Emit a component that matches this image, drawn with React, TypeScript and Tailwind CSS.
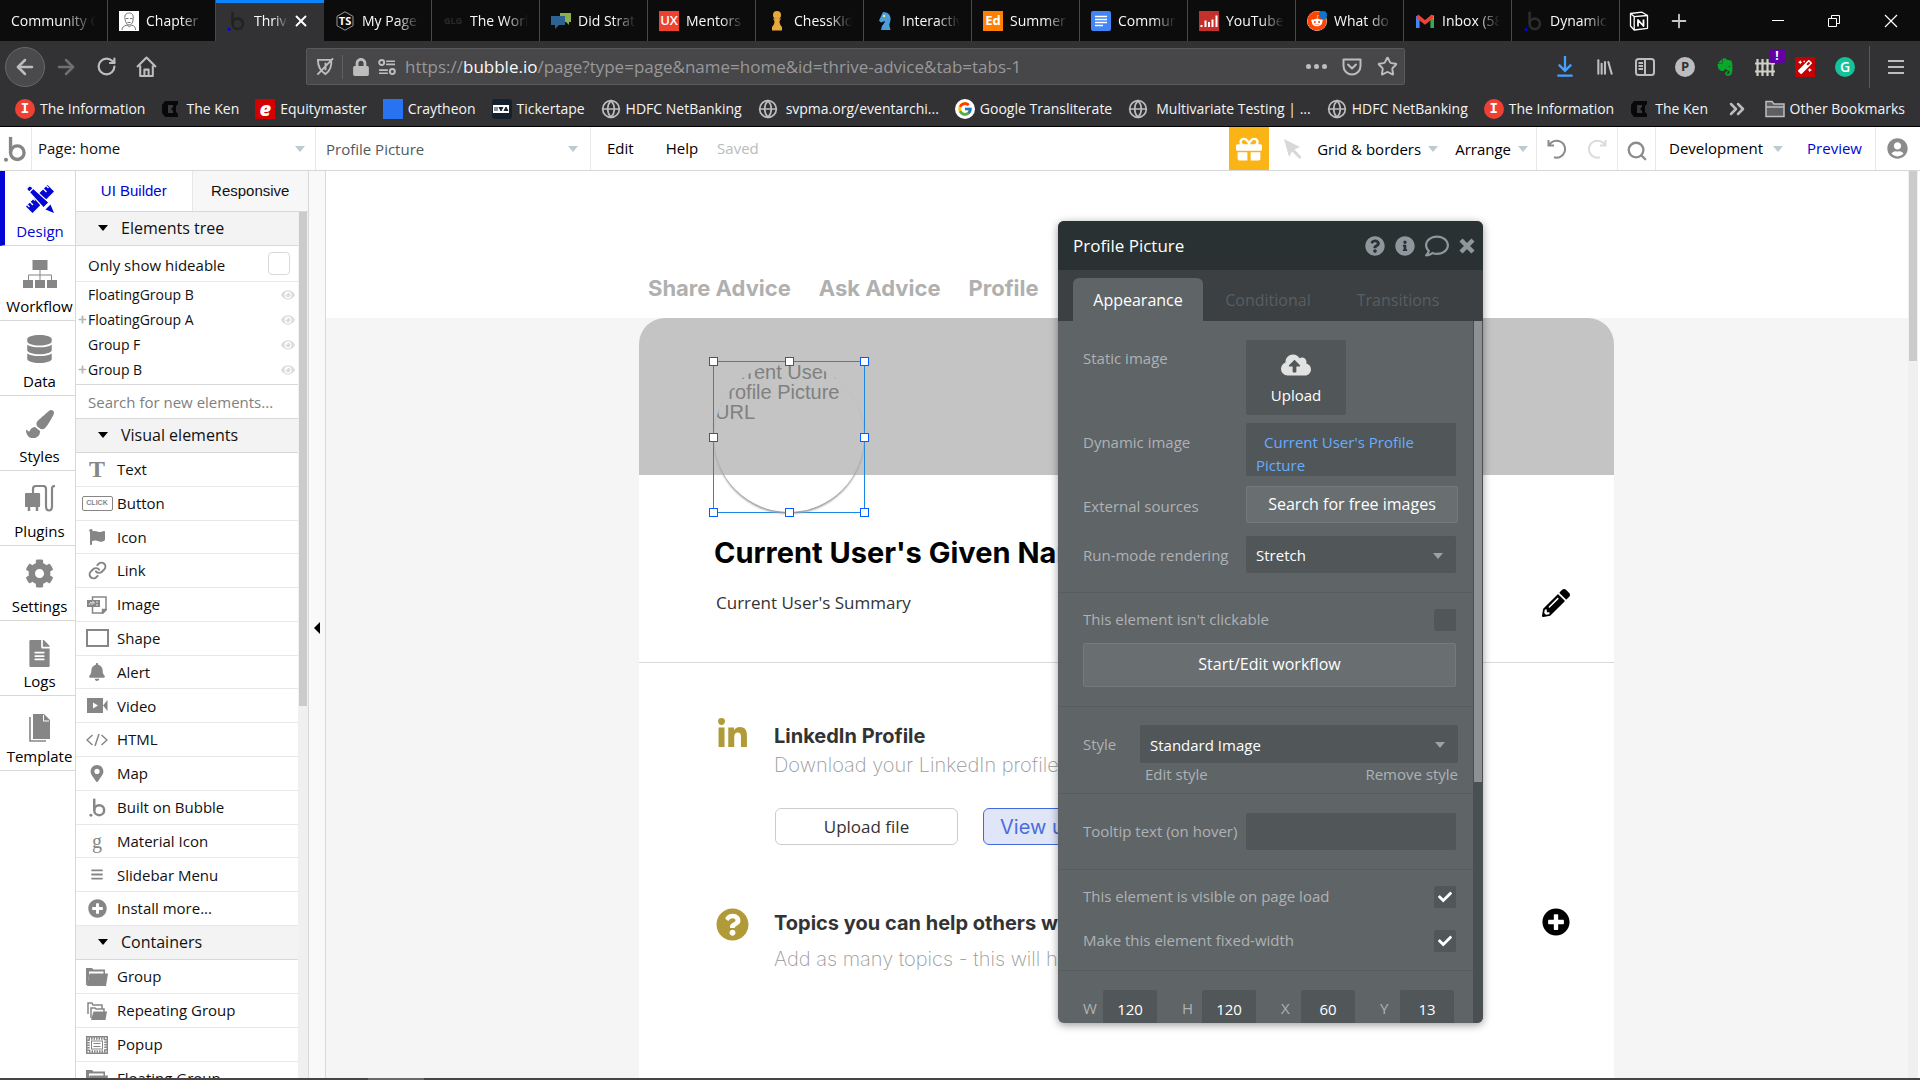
import React from 'react';
import {
  FaQuestionCircle, FaInfoCircle, FaRegComment, FaCloudUploadAlt, FaCheck, FaGift, FaEye, FaPlus, FaFlag,
  FaBell, FaMapMarkerAlt, FaDatabase, FaPaintBrush, FaCog, FaFileAlt, FaLinkedinIn, FaPlusCircle,
  FaPencilAlt, FaUserCircle, FaEvernote, FaMagic, FaBars, FaReddit, FaLock,
} from 'react-icons/fa';
import { FcGoogle } from 'react-icons/fc';
import { ArrowLeft, ArrowRight, RotateCw, Link, Search, Star, X, Plus, Globe, ChevronsRight, Library } from 'lucide-react';

const BubbleMark = ({ className = '', dot = 'currentColor' }: { className?: string; dot?: string }) => (
  <svg viewBox="0 0 24 28" className={className} fill="none" aria-hidden="true">
    <circle cx="14.5" cy="18" r="7.3" stroke="currentColor" strokeWidth="3.6" />
    <path d="M7.2 1v17" stroke="currentColor" strokeWidth="3.6" />
    <circle cx="2.3" cy="25.5" r="2.2" fill={dot} />
  </svg>
);

const Caret = ({ className = '' }: { className?: string }) => (
  <svg viewBox="0 0 10 6" className={`h-1.5 w-2.5 shrink-0 ${className}`} fill="currentColor" aria-hidden="true">
    <path d="M0 0h10L5 6z" />
  </svg>
);

const Letter = ({ children, className }: { children: React.ReactNode; className: string }) => (
  <span className={`flex h-5 w-5 shrink-0 items-center justify-center leading-none ${className}`}>{children}</span>
);

const NotionIcon = () => (
  <svg viewBox="0 0 20 20" className="h-5 w-5" fill="none" stroke="#fff" strokeWidth="1.3" strokeLinejoin="round" aria-hidden="true">
    <path d="M1.5 2.5 13 1.2l5.5 3.3v12.8L5.2 19 1.500 15z" />
    <path d="M1.500 2.500 5.200 5.600 18.500 4.500M5.200 5.600V19" />
    <path d="M9 15.500V9l5.500 6V8.500" strokeWidth="1.800" />
  </svg>
);

type TabData = { title: string; icon?: React.ReactNode };

const tabsBefore: TabData[] = [
  { title: 'Community G' },
  {
    title: 'Chapter 1',
    icon: (
      <svg viewBox="0 0 20 20" className="h-5 w-5 shrink-0 bg-white" fill="none" stroke="#777" strokeWidth="1" aria-hidden="true">
        <path d="M6 8C5 3 8 2 10.500 2S15 4 14 9c0 3-2 5-4 5S6.500 11 6 8z" />
        <path d="M7 7.500h2.500M11 7.500h2.500M8.500 11.500h3M3 19c0-3 2-4 5-5l2.500 2 2-2c3 1 4 2 4 5" />
      </svg>
    ),
  },
];

const tabsAfter: TabData[] = [
  {
    title: 'My Page',
    icon: (
      <Letter className="relative text-[11px] font-bold text-white">
        <svg viewBox="0 0 20 20" className="absolute inset-0 h-5 w-5" fill="none" stroke="#999" aria-hidden="true">
          <path d="M10 .8 18 5.300v9.400L10 19.200 2 14.700V5.300z" />
        </svg>
        <span className="relative">TS</span>
      </Letter>
    ),
  },
  { title: 'The World', icon: <Letter className="text-[9px] font-bold text-[#2a2a2a]">GLG</Letter> },
  {
    title: 'Did Strat',
    icon: (
      <svg viewBox="0 0 20 20" className="h-5 w-5 shrink-0" aria-hidden="true">
        <path d="M9 2h11v9h-2v3l-3-3H9z" fill="#8bb04b" />
        <path d="M0 5h14v9H8l-4 4v-4H0z" fill="#2d6394" />
      </svg>
    ),
  },
  { title: 'Mentors', icon: <Letter className="bg-[#ee4130] text-[13px] font-semibold text-white">UX</Letter> },
  {
    title: 'ChessKid',
    icon: (
      <svg viewBox="0 0 20 20" className="h-5 w-5 shrink-0" fill="#e9a93a" aria-hidden="true">
        <circle cx="10" cy="4" r="4" />
        <path d="M6 7.500h8L12.500 10c0 3 1 4 2.500 6v3.500H5V16c1.500-2 2.500-3 2.500-6z" />
      </svg>
    ),
  },
  {
    title: 'Interactiv',
    icon: (
      <svg viewBox="0 0 20 20" className="h-5 w-5 shrink-0" fill="#4a9fd8" aria-hidden="true">
        <path d="M8 1c6 0 8 4 7.500 8-.500 3-1.500 4-1 6l1 4H6l1-4c1-2 3-3 3-5L6 11.500 4 9.500z" />
        <circle cx="9" cy="5" r="1.200" fill="#f7e27a" />
      </svg>
    ),
  },
  { title: 'Summer', icon: <Letter className="bg-[#ff7f00] text-[13px] font-bold text-white">Ed</Letter> },
  {
    title: 'Commun',
    icon: (
      <svg viewBox="0 0 20 20" className="h-5 w-5 shrink-0" aria-hidden="true">
        <rect width="20" height="20" rx="2" fill="#4285f4" />
        <path d="M4 5.500h12M4 8.500h12M4 11.500h12M4 14.500h8" stroke="#fff" strokeWidth="1.700" />
      </svg>
    ),
  },
  {
    title: 'YouTube',
    icon: (
      <svg viewBox="0 0 20 20" className="h-5 w-5 shrink-0" aria-hidden="true">
        <rect width="20" height="20" fill="#c4302b" />
        <path d="M2.500 16v-2M6.500 16V9.500M10 16v-5M13.500 16V8.500M17.500 16V4.500" stroke="#fff" strokeWidth="2" />
      </svg>
    ),
  },
  {
    title: 'What do',
    icon: (
      <span className="relative h-5 w-5 shrink-0">
        <FaReddit className="h-5 w-5 rounded-full bg-white text-[#ff4500]" />
        <span className="absolute top-0 right-0 h-2 w-2 rounded-full bg-[#0a76d0]" />
      </span>
    ),
  },
  {
    title: 'Inbox (58',
    icon: (
      <svg viewBox="0 0 20 20" className="h-5 w-5 shrink-0" fill="none" strokeWidth="3.600" aria-hidden="true">
        <path d="M2.800 17V5" stroke="#4285f4" />
        <path d="M17.200 17V5" stroke="#34a853" />
        <path d="M17.200 8V4.500" stroke="#fbbc04" />
        <path d="M2 5l8 6.500L18 5" stroke="#ea4335" />
      </svg>
    ),
  },
  { title: 'Dynamic', icon: <BubbleMark className="h-5 w-5 shrink-0 text-[#2d2d2d]" dot="#00f" /> },
];

const BrowserTab = ({ tab }: { tab: TabData }) => (
  <button type="button" className="flex h-full w-27 shrink-0 items-center border-r border-[#4a4a4a] px-[11px] text-left">
    {tab.icon}
    <span
      className={`flex-1 overflow-hidden whitespace-nowrap [mask-image:linear-gradient(to_right,black_60%,transparent)] ${
        tab.icon ? 'ml-[7px]' : ''
      }`}
    >
      {tab.title}
    </span>
  </button>
);

const TabStrip = () => (
  <div className="flex h-[41px] items-center bg-[#0c0c0d] text-sm text-[#f9f9fa]">
    {tabsBefore.map((t) => (
      <BrowserTab key={t.title} tab={t} />
    ))}
    <div className="flex h-full w-27 shrink-0 items-center border-t-[3px] border-[#0a84ff] bg-[#323234] px-[10px] pb-[3px]">
      <BubbleMark className="h-5 w-5 shrink-0 text-[#222]" dot="#00f" />
      <span className="ml-2 flex-1 overflow-hidden whitespace-nowrap [mask-image:linear-gradient(to_right,black_60%,transparent)]">
        Thrive
      </span>
      <button type="button" aria-label="Close tab" className="mr-1 ml-1">
        <X className="h-[18px] w-[18px] text-white" strokeWidth={2.500} />
      </button>
    </div>
    {tabsAfter.map((t) => (
      <BrowserTab key={t.title} tab={t} />
    ))}
    <button type="button" aria-label="Notion" className="ml-[9px]">
      <NotionIcon />
    </button>
    <button type="button" aria-label="New tab" className="ml-[19px]">
      <Plus className="h-[22px] w-[22px] text-[#c8c8c8]" strokeWidth={2} />
    </button>
    <div className="ml-auto flex items-center gap-11 pr-[22px] text-white">
      <button type="button" aria-label="Minimize" className="h-px w-3 bg-white" />
      <button type="button" aria-label="Restore">
        <svg viewBox="0 0 12 12" className="h-3 w-3" fill="none" stroke="currentColor" aria-hidden="true">
          <path d="M.500 3.500h8v8h-8zM3.500 3.500v-3h8v8h-3" />
        </svg>
      </button>
      <button type="button" aria-label="Close window">
        <svg viewBox="0 0 14 14" className="h-3.5 w-3.5" stroke="currentColor" strokeWidth="1.200" aria-hidden="true">
          <path d="M1 1l12 12M13 1 1 13" />
        </svg>
      </button>
    </div>
  </div>
);

const NavBar = () => (
  <div className="flex h-[47px] items-center pt-1 text-[#bdbdbe]">
    <button type="button" aria-label="Back" className="ml-[5px] flex h-10 w-10 items-center justify-center rounded-full border border-[#68686a] bg-[#4a4a4c]">
      <ArrowLeft className="h-6 w-6" strokeWidth={2.500} />
    </button>
    <button type="button" aria-label="Forward" className="ml-[9px] text-[#6f6f71]">
      <ArrowRight className="h-6 w-6" strokeWidth={2.500} />
    </button>
    <button type="button" aria-label="Reload" className="ml-[18px]">
      <RotateCw className="h-[21px] w-[21px]" strokeWidth={2.500} />
    </button>
    <button type="button" aria-label="Home" className="ml-[19px]">
      <svg viewBox="0 0 20 20" className="h-[21px] w-[21px]" fill="none" stroke="currentColor" strokeWidth="2" strokeLinejoin="round" aria-hidden="true">
        <path d="M1 10.500 10 1.500l9 9M4 9v10h12V9M8 19v-6h4v6" />
      </svg>
    </button>
    <div className="ml-[149px] flex h-[37px] w-[1099px] items-center rounded-xs border border-[#5a5a5c] bg-[#474749] pr-[6px]">
      <svg viewBox="0 0 20 20" className="ml-[9px] h-[19px] w-[19px]" fill="none" stroke="currentColor" strokeWidth="2" aria-hidden="true">
        <path d="M2 3h14c1 8-2 12-6 15C5 15 2 11 2 3zM10 6v8M1.500 18.500 18 1.500" />
      </svg>
      <span className="ml-[7px] h-6 w-px bg-[#606062]" />
      <FaLock className="ml-[10px] h-[18px] w-4" />
      <svg viewBox="0 0 20 18" className="ml-[9px] h-4 w-[18px]" fill="none" stroke="currentColor" strokeWidth="2.200" aria-hidden="true">
        <circle cx="4" cy="4" r="2.800" />
        <circle cx="16" cy="14" r="2.800" />
        <path d="M9 2.500h10M9 6h10M1 12.500h10M1 16h10" strokeWidth="1.800" />
      </svg>
      <div role="textbox" aria-label="Address" tabIndex={0} className="ml-[9px] flex-1 pt-px text-[17px] whitespace-nowrap text-[#98989a]">
        https://<span className="text-[#f9f9fa]">bubble.io</span>/page?type=page&amp;name=home&amp;id=thrive-advice&amp;tab=tabs-1
      </div>
      <button type="button" aria-label="Page actions" className="flex gap-[3px]">
        <span className="h-[5px] w-[5px] rounded-full bg-current" />
        <span className="h-[5px] w-[5px] rounded-full bg-current" />
        <span className="h-[5px] w-[5px] rounded-full bg-current" />
      </button>
      <button type="button" aria-label="Save to Pocket" className="ml-[15px]">
        <svg viewBox="0 0 20 18" className="h-[18px] w-5" fill="none" stroke="currentColor" strokeWidth="2" strokeLinecap="round" strokeLinejoin="round" aria-hidden="true">
          <path d="M1.500 1.500h17V8a8.500 8.500 0 0 1-17 0zM6 6.500l4 4 4-4" />
        </svg>
      </button>
      <button type="button" aria-label="Bookmark" className="ml-[15px]">
        <Star className="h-[21px] w-[21px]" strokeWidth={2.200} />
      </button>
    </div>
    <div className="ml-auto flex items-center gap-5">
      <button type="button" aria-label="Downloads" className="text-[#45a1ff]">
        <svg viewBox="0 0 20 22" className="h-[21px] w-5" fill="none" stroke="currentColor" strokeWidth="2.400" aria-hidden="true">
          <path d="M10 0v15M3.500 9l6.500 6.500L16.500 9M2 20.500h16" />
        </svg>
      </button>
      <button type="button" aria-label="Library">
        <Library className="h-5 w-5" strokeWidth={2.500} />
      </button>
      <button type="button" aria-label="Sidebars">
        <svg viewBox="0 0 20 18" className="h-[18px] w-5" fill="none" stroke="currentColor" strokeWidth="2" aria-hidden="true">
          <rect x="1" y="1" width="18" height="16" rx="2.500" />
          <path d="M10 1v16M3.500 5H8M3.500 8H8M3.500 11H8" />
        </svg>
      </button>
      <Letter className="rounded-full bg-[#bdbdbe] text-[13px] font-bold text-[#323234]">P</Letter>
      <FaEvernote className="h-5 w-5 text-[#09a82b]" />
      <span className="relative">
        <svg viewBox="0 0 20 20" className="h-5 w-5" stroke="#d0d0c8" strokeWidth="2.200" aria-hidden="true">
          <path d="M2.500 2v17M7.500 2v17M12.500 2v17M17.500 2v17M0 6.500h20M0 14.500h20" />
        </svg>
        <span className="absolute -top-2 left-3.5 flex h-3.5 w-4 items-center justify-center rounded-xs bg-[#6200a4] text-xs font-bold text-white">!</span>
      </span>
      <Letter className="bg-[#c40000] text-[#fff]"><FaMagic className="h-3.5 w-3.5" /></Letter>
      <Letter className="rounded-full bg-[#15c39a] text-sm font-semibold text-white">G</Letter>
    </div>
    <span className="ml-[14px] h-[42px] w-px bg-[#5a5a5c]" />
    <button type="button" aria-label="Menu" className="mr-4 ml-[18px] flex flex-col gap-1">
      <span className="h-[2px] w-4 bg-current" />
      <span className="h-[2px] w-4 bg-current" />
      <span className="h-[2px] w-4 bg-current" />
    </button>
  </div>
);

const InfoIcon = () => <Letter className="rounded-full bg-[#ef4034] font-mono text-sm font-bold text-white">I</Letter>;
const KenIcon = () => (
  <svg viewBox="0 0 20 20" className="h-5 w-5 shrink-0" aria-hidden="true">
    <path d="M4 2h13v3l-2 2v6l2 2v3H4l-3-4V6z" fill="#080808" />
    <path d="M7 6h5v2l-2 2 2 2v2H7z" fill="#3a3a3c" />
  </svg>
);
const GlobeIcon = () => <Globe className="h-5 w-5 shrink-0 text-[#bdbdbe]" strokeWidth={2} />;

const bookmarks: { label: string; icon: React.ReactNode; indent?: boolean }[] = [
  { label: 'The Information', icon: <InfoIcon /> },
  { label: 'The Ken', icon: <KenIcon /> },
  { label: 'Equitymaster', icon: <Letter className="bg-[#d40000] text-xl font-black text-white italic">e</Letter> },
  { label: 'Craytheon', icon: <Letter className="bg-[#2874f0]">{''}</Letter> },
  {
    label: 'Tickertape',
    icon: (
      <svg viewBox="0 0 20 20" className="h-5 w-5 shrink-0" aria-hidden="true">
        <rect width="20" height="20" rx="3" fill="#14202c" />
        <rect x="1" y="6" width="16" height="8" fill="#fff" />
        <path d="M2 9h4M2 11h4M7 8l2 4 2-4M12 12l2-4 2 4" stroke="#14202c" fill="#14202c" />
      </svg>
    ),
  },
  { label: 'HDFC NetBanking', icon: <GlobeIcon /> },
  { label: 'svpma.org/eventarchi...', icon: <GlobeIcon />, indent: true },
  {
    label: 'Google Transliterate',
    icon: (
      <Letter className="rounded-full bg-white">
        <FcGoogle className="h-4 w-4" />
      </Letter>
    ),
  },
  { label: 'Multivariate Testing | ...', icon: <GlobeIcon />, indent: true },
  { label: 'HDFC NetBanking', icon: <GlobeIcon /> },
  { label: 'The Information', icon: <InfoIcon /> },
  { label: 'The Ken', icon: <KenIcon /> },
];

const BookmarksBar = () => (
  <div className="flex h-[39px] items-center gap-4 border-b border-black px-[15px] pt-1 text-sm text-[#f4f4f5]">
    {bookmarks.map((b, i) => (
      <a key={i} href="#" className={`flex items-center whitespace-nowrap ${b.indent ? 'gap-2' : 'gap-[5px]'}`}>
        {b.icon}
        {b.label}
      </a>
    ))}
    <button type="button" aria-label="More bookmarks" className="ml-auto">
      <ChevronsRight className="h-6 w-6 text-[#bdbdbe]" strokeWidth={2.500} />
    </button>
    <a href="#" className="flex items-center gap-[5px] whitespace-nowrap">
      <svg viewBox="0 0 20 18" className="h-[18px] w-5" fill="#5f5f61" stroke="#bdbdbe" strokeWidth="1.500" aria-hidden="true">
        <path d="M1 16.500V1.500h6l2 2.500h10v12.500zM1 7h18" />
      </svg>
      Other Bookmarks
    </a>
  </div>
);

const EditorToolbar = () => (
  <header className="flex h-11 items-stretch border-b border-[#d5d7d9] bg-white text-[15px] text-black">
    <a href="#" aria-label="Bubble" className="flex w-8 items-center justify-center border-r border-[#e8e8e8] pr-[2px] text-[#858585]">
      <BubbleMark className="h-[26px] w-6" />
    </a>
    <button type="button" className="flex w-71 items-center justify-between border-r border-[#e8e8e8] pr-[10px] pl-[6px] text-[#111]">
      Page: home <Caret className="text-[#bfcad0]" />
    </button>
    <button type="button" className="flex w-[275px] items-center justify-between border-r border-[#e8e8e8] pt-px pr-3 pl-[10px] text-[#4f5a60]">
      Profile Picture <Caret className="text-[#bfcad0]" />
    </button>
    <button type="button" className="ml-4">Edit</button>
    <button type="button" className="ml-8">Help</button>
    <span className="ml-[19px] self-center text-[#b8bbbd]">Saved</span>
    <button type="button" aria-label="Rewards" className="ml-auto flex w-10 items-center justify-center bg-[#fbb415] text-white">
      <FaGift className="h-[26px] w-[26px]" />
    </button>
    <button type="button" aria-label="Pointer" className="flex w-12 items-center justify-center text-[#d8d8d8]">
      <svg viewBox="0 0 18 20" className="h-5 w-[18px]" fill="currentColor" aria-hidden="true">
        <path d="M0 0l16 8-5.500 2.500 7 7.500-2 2-7.500-7.500L5 18z" />
      </svg>
    </button>
    <button type="button" className="flex items-center gap-[7px] pt-px">
      Grid &amp; borders <Caret className="text-[#bfcad0]" />
    </button>
    <button type="button" className="ml-[17px] flex items-center gap-[7px] border-r border-[#e8e8e8] pt-px pr-[8px]">
      Arrange <Caret className="text-[#bfcad0]" />
    </button>
    <div className="flex w-[81px] items-center justify-center gap-5 border-r border-[#e8e8e8] text-[#8b8b8b]">
      <button type="button" aria-label="Undo">
        <svg viewBox="0 0 20 20" className="h-5 w-5" fill="none" stroke="currentColor" strokeWidth="2" aria-hidden="true">
          <path d="M1.500 1v5.500H7M2 6.300A8.500 8.500 0 1 1 7 18.300" />
        </svg>
      </button>
      <button type="button" aria-label="Redo">
        <svg viewBox="0 0 20 20" className="h-5 w-5 text-[#dcdcdc]" fill="none" stroke="currentColor" strokeWidth="2" aria-hidden="true">
          <path d="M18.500 1v5.500H13M18 6.300A8.500 8.500 0 1 0 13 18.300" />
        </svg>
      </button>
    </div>
    <button type="button" aria-label="Search" className="flex w-[38px] items-center justify-center border-r border-[#e8e8e8] pt-1 text-[#8b8b8b]">
      <Search className="h-[22px] w-[22px]" strokeWidth={2.500} />
    </button>
    <button type="button" className="ml-[13px] flex items-center gap-[10px]">
      Development <Caret className="text-[#bfcad0]" />
    </button>
    <a href="#" className="ml-6 flex items-center border-r border-[#e8e8e8] pr-[13px] text-[#0205d3]">Preview</a>
    <button type="button" aria-label="Account" className="flex w-11 items-center justify-center pr-[2px] text-[#8b8b8b]">
      <FaUserCircle className="h-[21px] w-[21px]" />
    </button>
  </header>
);

const DesignIcon = () => (
  <svg viewBox="0 0 28 28" className="h-7 w-7" fill="currentColor" aria-hidden="true">
    <path d="M0 21.500 21.500 0 28 6.500 6.500 28z" />
    <path d="M3.500 16.500l3.500 3.500M1.500 20l2 2M7 13.500l2 2M17 3.500l3.500 3.500M20.500 1l2 2" stroke="#fff" strokeWidth="1.300" />
    <path d="M.800 4.500C.800 3 3 .800 4.500.800L23 17.500 17.500 23z" stroke="#fff" strokeWidth="1.200" />
    <path d="M3 7.500 7.500 3" stroke="#fff" strokeWidth="1.200" />
    <path d="M24.500 19.500 28 28l-8.500-3.500z" />
  </svg>
);
const WorkflowIcon = () => (
  <svg viewBox="0 0 34 28" className="h-7 w-[34px]" fill="currentColor" aria-hidden="true">
    <path d="M9.500 0h15v10h-15zM0 20h10v8H0zM12 20h10v8H12zM24 20h10v8H24z" />
    <path d="M17 10v10M5.500 20v-5h23v5" stroke="currentColor" fill="none" />
  </svg>
);
const PluginsIcon = () => (
  <svg viewBox="0 0 30 28" className="h-7 w-[30px]" fill="none" stroke="currentColor" strokeWidth="2.200" aria-hidden="true">
    <path d="M8 8V4c0-2 1-3 3-3h7c2 0 3 1 3 3v17c0 6 6 6 6 0V5c0-3 0-4 3-4" />
    <path d="M1 9h13v12H1z" fill="currentColor" strokeLinejoin="round" />
    <path d="M4 21v5M12 21v5" strokeWidth="2.500" />
  </svg>
);
const TemplateIcon = () => (
  <svg viewBox="0 0 21 28" className="h-7 w-[21px]" fill="currentColor" aria-hidden="true">
    <path d="M4 0h11l6 6v19H4z" />
    <path d="M14.500 1v6H20" stroke="#fff" fill="none" />
    <path d="M1 3v24h16" stroke="currentColor" strokeWidth="1.600" fill="none" />
  </svg>
);

const navItems: { label: string; icon: React.ReactNode; active?: boolean; tight?: boolean }[] = [
  { label: 'Design', icon: <DesignIcon />, active: true },
  { label: 'Workflow', icon: <WorkflowIcon /> },
  { label: 'Data', icon: <FaDatabase className="h-7 w-[25px]" /> },
  { label: 'Styles', icon: <FaPaintBrush className="h-7 w-7" /> },
  { label: 'Plugins', icon: <PluginsIcon /> },
  { label: 'Settings', icon: <FaCog className="h-[29px] w-[29px]" /> },
  { label: 'Logs', icon: <FaFileAlt className="h-[27px] w-[21px]" />, tight: true },
  { label: 'Template', icon: <TemplateIcon />, tight: true },
];

const MainNav = () => (
  <nav className="flex w-[76px] shrink-0 flex-col border-r border-[#d8d8d8] bg-white text-[15px]">
    {navItems.map((n) => (
      <a
        key={n.label}
        href="#"
        className={`flex h-[75px] flex-col items-center justify-end border-b border-b-[#d8d8d8] pb-[2px] ${
          n.active ? 'border-l-[5px] border-l-[#0205d3] text-[#0205d3]' : 'pl-1'
        }`}
      >
        <span className={n.active ? '' : 'text-[#868686]'}>{n.icon}</span>
        <span className={`leading-6 ${n.tight ? 'mt-[2px]' : 'mt-[6px]'}`}>{n.label}</span>
      </a>
    ))}
  </nav>
);

const FolderIcon = () => (
  <svg viewBox="0 0 22 18" className="h-[18px] w-[22px]" fill="currentColor" aria-hidden="true">
    <path d="M0 17V0h6l1.500 1.500H19V6h-1.500V3.500H3V8L1.500 17z" />
    <path d="M3.500 5.500H22L20 18H1z" />
  </svg>
);

const ShapeBox = () => <span className="h-[18px] w-[23px] border-2 border-current" />;
const visualElements: { label: string; icon: React.ReactNode }[] = [
  { label: 'Text', icon: <span className="font-['Liberation_Serif'] text-2xl leading-none font-bold">T</span> },
  {
    label: 'Button',
    icon: <span className="flex h-[15px] w-[31px] items-center justify-center rounded-xs border border-current font-['Liberation_Sans'] text-[7px] font-bold">CLICK</span>,
  },
  { label: 'Icon', icon: <FaFlag className="h-4 w-[18px]" /> },
  { label: 'Link', icon: <Link className="h-[19px] w-[19px]" strokeWidth={2.500} /> },
  {
    label: 'Image',
    icon: (
      <svg viewBox="0 0 20 18" className="h-[18px] w-5" fill="none" stroke="currentColor" strokeWidth="1.500" aria-hidden="true">
        <path d="M5.500 4V1H19v13l-3 3H5.500v-6" />
        <path d="M19 13.500h-3.500V17z" fill="currentColor" />
        <path d="M0 4h13v7H0z" fill="currentColor" stroke="none" />
        <path d="M2 9l2-3M5 9V6h2v2M9 6h2M9 9h2" stroke="#fff" strokeWidth=".8" />
      </svg>
    ),
  },
  { label: 'Shape', icon: <ShapeBox /> },
  { label: 'Alert', icon: <FaBell className="h-[18px] w-4" /> },
  {
    label: 'Video',
    icon: (
      <svg viewBox="0 0 21 15" className="h-[15px] w-[21px]" fill="currentColor" aria-hidden="true">
        <path d="M0 0h16v15H0zM16 7.500 20.500 2v11z" />
        <path d="M6 4.500v6l5-3z" fill="#fff" />
      </svg>
    ),
  },
  {
    label: 'HTML',
    icon: (
      <svg viewBox="0 0 22 12" className="h-3 w-[22px]" fill="none" stroke="currentColor" strokeWidth="1.500" aria-hidden="true">
        <path d="M6.500 1 1 6l5.500 5M15.500 1 21 6l-5.500 5M13 0 9 12" />
      </svg>
    ),
  },
  { label: 'Map', icon: <FaMapMarkerAlt className="h-[17px] w-3.5" /> },
  { label: 'Built on Bubble', icon: <BubbleMark className="h-[19px] w-[17px]" /> },
  { label: 'Material Icon', icon: <span className="font-['Liberation_Serif'] text-xl leading-none">g</span> },
  { label: 'Slidebar Menu', icon: <FaBars className="h-[13px] w-3.5" /> },
  { label: 'Install more...', icon: <FaPlusCircle className="h-[19px] w-[19px]" /> },
];

const containers: { label: string; icon: React.ReactNode }[] = [
  { label: 'Group', icon: <FolderIcon /> },
  {
    label: 'Repeating Group',
    icon: (
      <svg viewBox="0 0 20 18" className="h-[18px] w-5" fill="currentColor" aria-hidden="true">
        <path d="M1 12V1h4l1 2h9v4" fill="none" stroke="currentColor" strokeWidth="1.500" />
        <path d="M4 16V6h4l1 1h8v3" fill="none" stroke="currentColor" strokeWidth="1.500" />
        <path d="M6.500 9.500H20L18.500 18H4z" />
      </svg>
    ),
  },
  {
    label: 'Popup',
    icon: (
      <svg viewBox="0 0 22 18" className="h-[18px] w-[22px]" fill="none" stroke="currentColor" aria-hidden="true">
        <rect x="2.500" y="2.500" width="17" height="13" strokeWidth="2.500" strokeDasharray="1.500 1" />
        <rect x=".750" y=".750" width="20.500" height="16.500" strokeWidth="1.500" />
        <rect x="5.500" y="5" width="11" height="8" />
        <path d="M7.500 7.500h7M7.500 10.500h7" />
      </svg>
    ),
  },
  { label: 'Floating Group', icon: <FolderIcon /> },
];

const ElementRow = ({ label, icon }: { label: string; icon: React.ReactNode }) => (
  <button type="button" className="flex items-center border-b border-[#e8e8e8] bg-white text-left">
    <span className="ml-[5px] flex w-8 shrink-0 justify-center text-[#868686]">{icon}</span>
    <span className="ml-1">{label}</span>
  </button>
);

const SectionHeader = ({ children }: { children: React.ReactNode }) => (
  <button type="button" className="flex h-[34px] w-full shrink-0 items-center border-b border-[#d8d8d8] bg-[#f3f3f3] pb-[2px] pl-[22px] text-left text-base">
    <Caret className="mr-[13px] text-black" />
    {children}
  </button>
);

const treeItems = [
  { label: 'FloatingGroup B', expandable: false },
  { label: 'FloatingGroup A', expandable: true },
  { label: 'Group F', expandable: false },
  { label: 'Group B', expandable: true },
];

const ElementsPanel = () => (
  <aside className="flex w-[233px] shrink-0 flex-col border-r border-[#d8d8d8] bg-white text-[15px] text-[#111]">
    <div className="flex h-[41px] shrink-0 border-b border-[#d8d8d8] font-['Liberation_Sans']">
      <button type="button" className="flex-1 border-r border-[#e8e8e8] text-[#0205d3]">UI Builder</button>
      <button type="button" className="flex-1 bg-[#f7f7f7]">Responsive</button>
    </div>
    <div className="flex min-h-0 flex-1">
      <div className="flex min-w-0 flex-1 flex-col overflow-hidden">
        <SectionHeader>Elements tree</SectionHeader>
        <label className="flex h-9 shrink-0 items-center justify-between border-b border-[#e8e8e8] pt-1 pr-2 pl-3">
          Only show hideable
          <input type="checkbox" className="mb-1 h-[23px] w-[22px] appearance-none rounded-sm border border-[#d8d8d8] bg-white" />
        </label>
        <ul className="shrink-0 border-b border-[#d8d8d8] pb-[2px] text-sm">
          {treeItems.map((t) => (
            <li key={t.label} className="flex h-[25px] items-center pr-[3px]">
              <span className="flex w-3 pl-[2px] text-[#b5b5b5]">{t.expandable && <FaPlus className="h-[9px] w-[9px]" />}</span>
              <span className="flex-1">{t.label}</span>
              <FaEye className="h-3.5 w-3.5 text-[#dcdcdc]" />
            </li>
          ))}
        </ul>
        <input
          aria-label="Search for new elements"
          placeholder="Search for new elements..."
          className="h-[34px] w-full shrink-0 border-b border-[#d8d8d8] px-3 outline-none placeholder:text-[#808080]"
        />
        <SectionHeader>Visual elements</SectionHeader>
        <div className="grid h-[473px] shrink-0 auto-rows-fr">
          {visualElements.map((e) => (
            <ElementRow key={e.label} {...e} />
          ))}
        </div>
        <SectionHeader>Containers</SectionHeader>
        <div className="grid shrink-0 auto-rows-[34px]">
          {containers.map((e) => (
            <ElementRow key={e.label} {...e} />
          ))}
        </div>
      </div>
      <div className="w-[10px] shrink-0 bg-[#f0f0f0] px-px">
        <div className="h-[494px] bg-[#cbcbcb]" />
      </div>
    </div>
  </aside>
);

const handlePositions = [
  '-left-[5px] -top-[5px]',
  'left-[71px] -top-[5px]',
  '-right-[5px] -top-[5px]',
  '-left-[5px] top-[71px]',
  '-right-[5px] top-[71px]',
  '-left-[5px] -bottom-[5px]',
  'left-[71px] -bottom-[5px]',
  '-right-[5px] -bottom-[5px]',
];

const SelectedPicture = () => (
  <div className="absolute top-[43px] left-[74px] h-[152px] w-[152px] border border-[#1b87e6]">
    <div className="h-full w-full overflow-hidden rounded-full pl-px font-['Liberation_Sans'] text-xl leading-5 text-[#808080] shadow-[0_2px_2px_#a0a0a0]">
      Current User's
      <br />
      Profile Picture
      <br />
      URL
    </div>
    {handlePositions.map((p) => (
      <span key={p} className={`absolute h-[9px] w-[9px] border border-[#0060ff] bg-white ${p}`} />
    ))}
  </div>
);

const PageCanvas = () => (
  <div className="h-full bg-[#f5f5f5] font-['Inter']">
    <div className="flex h-[147px] items-end gap-7 bg-white pb-4 pl-[322px] text-[22px] leading-7 font-bold text-[#b0b0b0]">
      <a href="#">Share Advice</a>
      <a href="#">Ask Advice</a>
      <a href="#">Profile</a>
    </div>
    <div className="h-full pr-[294px] pl-[313px]">
      <div className="h-full rounded-t-[26px] bg-white">
        <div className="relative h-[157px] rounded-t-[26px] bg-[#c4c4c4]">
          <SelectedPicture />
        </div>
        <section className="h-[188px] border-b border-[#d9d9d9] pr-11 pl-[75px]">
          <h1 className="pt-[60px] text-[29px] leading-9 font-bold text-black">Current User's Given Name</h1>
          <div className="mt-[14px] flex h-9 items-center justify-between font-['Open_Sans'] text-[17px] text-[#333]">
            <span className="pl-[2px]">Current User's Summary</span>
            <button type="button" aria-label="Edit profile">
              <FaPencilAlt className="h-7 w-7 text-black" />
            </button>
          </div>
        </section>
        <section className="flex pt-[55px] pr-11 pl-[77px]">
          <FaLinkedinIn className="h-[33px] w-[33px] shrink-0 text-[#b09b38]" />
          <div className="ml-[25px] pt-1">
            <h2 className="text-[20px] leading-7 font-bold text-[#333]">LinkedIn Profile</h2>
            <p className="mt-px text-[20px] leading-7 font-extralight text-[#999]">Download your LinkedIn profile</p>
            <div className="mt-[29px] flex gap-[25px]">
              <button type="button" className="ml-px h-[37px] w-[183px] rounded-md border border-[#ccc] font-['Open_Sans'] text-[17px] text-[#333]">
                Upload file
              </button>
              <button type="button" className="h-[37px] rounded-md border border-[#4469dc] bg-[#e0e5f8] px-4 text-[20px] text-[#4a6ddc]">
                View upload
              </button>
            </div>
          </div>
        </section>
        <section className="flex pt-[63px] pr-11 pl-[77px]">
          <FaQuestionCircle className="h-[33px] w-[33px] shrink-0 text-[#b09b38]" />
          <div className="ml-[25px] pt-px">
            <h2 className="text-[20px] leading-7 font-bold text-[#333]">Topics you can help others with</h2>
            <p className="mt-2 text-[20px] leading-7 font-extralight text-[#999]">Add as many topics - this will help</p>
          </div>
          <button type="button" aria-label="Add topic" className="ml-auto self-start">
            <FaPlusCircle className="h-7 w-7 text-black" />
          </button>
        </section>
      </div>
    </div>
  </div>
);

const CheckRow = ({ label, checked, className = '' }: { label: string; checked: boolean; className?: string }) => (
  <label className={`flex h-[23px] items-center justify-between ${className}`}>
    {label}
    <span className="relative h-[22px] w-[22px]">
      <input type="checkbox" defaultChecked={checked} className="block h-[22px] w-[22px] appearance-none rounded-xs bg-[#515659]" />
      {checked && <FaCheck className="pointer-events-none absolute top-1 left-1 h-3.5 w-3.5 text-white" />}
    </span>
  </label>
);

const SelectBox = ({ id, value, className }: { id: string; value: string; className: string }) => (
  <span className={`relative block ${className}`}>
    <select id={id} defaultValue={value} className="h-full w-full appearance-none rounded-xs bg-[#515659] px-[10px] pt-[2px] text-white">
      <option>{value}</option>
    </select>
    <Caret className="pointer-events-none absolute top-[17px] right-[13px] text-[#9da2a5]" />
  </span>
);

const dims = [
  { label: 'W', value: '120' },
  { label: 'H', value: '120' },
  { label: 'X', value: '60' },
  { label: 'Y', value: '13' },
];

const PropertyEditor = () => (
  <div className="absolute top-[50px] left-[732px] flex h-[802px] w-[425px] flex-col overflow-hidden rounded-md bg-[#5f6467] text-[15px] text-[#aeb2b4] shadow-[0_2px_8px_rgba(0,0,0,0.4)]">
    <div className="flex h-[49px] shrink-0 items-center bg-[#2a3132] pt-px pr-2 pl-[15px]">
      <h2 className="flex-1 text-[17px] text-white">Profile Picture</h2>
      <div className="flex items-center gap-[10px] text-[#8d979c]">
        <button type="button" aria-label="Help"><FaQuestionCircle className="h-5 w-5" /></button>
        <button type="button" aria-label="Info"><FaInfoCircle className="h-5 w-5" /></button>
        <button type="button" aria-label="Comments"><FaRegComment className="h-6 w-6" /></button>
        <button type="button" aria-label="Close">
          <svg viewBox="0 0 16 16" className="h-4 w-4" stroke="currentColor" strokeWidth="4.500" aria-hidden="true">
            <path d="M2 2l12 12M14 2 2 14" />
          </svg>
        </button>
      </div>
    </div>
    <div className="flex h-[51px] shrink-0 items-end bg-[#3c4042] pl-[15px] text-base text-[#595e61]">
      <button type="button" className="h-[43px] w-[130px] rounded-t-md bg-[#5f6467] text-white">Appearance</button>
      <button type="button" className="h-[43px] w-[130px]">Conditional</button>
      <button type="button" className="h-[43px] w-[130px]">Transitions</button>
    </div>
    <div className="flex min-h-0 flex-1">
      <div className="min-w-0 flex-1">
        <div className="flex flex-col border-b border-[#575c5f] pt-[19px] pr-[17px] pb-[19px] pl-[25px]">
          <div className="flex h-[75px] justify-between">
            <span className="pt-[7px]">Static image</span>
            <button type="button" className="mr-[110px] flex w-[100px] flex-col items-center rounded-xs bg-[#515659] pt-2 text-white">
              <FaCloudUploadAlt className="h-[34px] w-[30px] text-[#e2e2e2]" />
              <span className="mt-px leading-6">Upload</span>
            </button>
          </div>
          <div className="mt-2 flex h-[53px] justify-between">
            <span className="pt-2">Dynamic image</span>
            <button type="button" className="w-[210px] rounded-xs bg-[#515659] px-[10px] pt-2 text-left leading-[23px] text-[#66adff]">
              <span className="pl-2">Current User's Profile</span> Picture
            </button>
          </div>
          <div className="mt-[10px] -mr-[2px] flex h-[37px] items-center justify-between">
            <span className="pt-[3px]">External sources</span>
            <button type="button" className="h-full w-[212px] rounded-xs border border-[#74797c] bg-[#696e71] pb-px text-base text-white">
              Search for free images
            </button>
          </div>
          <div className="mt-[13px] flex h-[37px] items-center justify-between">
            <label htmlFor="rendering" className="pt-px">Run-mode rendering</label>
            <SelectBox id="rendering" value="Stretch" className="h-[37px] w-[210px]" />
          </div>
        </div>
        <div className="border-b border-[#575c5f] pt-[15px] pr-[17px] pb-[19px] pl-[25px]">
          <CheckRow label="This element isn't clickable" checked={false} />
          <button type="button" className="mt-3 h-11 w-full rounded-xs border border-[#74797c] bg-[#696e71] pb-[2px] text-base text-white">
            Start/Edit workflow
          </button>
        </div>
        <div className="border-b border-[#575c5f] pt-[18px] pr-[15px] pb-2 pl-[25px]">
          <div className="flex items-center justify-between">
            <label htmlFor="style">Style</label>
            <SelectBox id="style" value="Standard Image" className="h-[38px] w-[318px]" />
          </div>
          <div className="flex justify-between pl-[62px] leading-[22px]">
            <a href="#">Edit style</a>
            <a href="#">Remove style</a>
          </div>
        </div>
        <div className="flex items-center justify-between border-b border-[#575c5f] pt-[19px] pr-[17px] pb-[19px] pl-[25px]">
          <label htmlFor="tooltip">Tooltip text (on hover)</label>
          <input id="tooltip" className="h-[37px] w-[210px] rounded-xs bg-[#515659] px-2 text-white" />
        </div>
        <div className="border-b border-[#575c5f] pt-[15px] pr-[17px] pb-[18px] pl-[25px]">
          <CheckRow label="This element is visible on page load" checked />
          <CheckRow label="Make this element fixed-width" checked className="mt-[21px]" />
        </div>
        <div className="flex justify-between pt-[19px] pr-[19px] pl-[25px]">
          {dims.map((d) => (
            <label key={d.label} className="flex items-center">
              <span className="w-5">{d.label}</span>
              <input defaultValue={d.value} className="h-[37px] w-[54px] rounded-xs bg-[#515659] pt-px text-center text-white" />
            </label>
          ))}
        </div>
      </div>
      <div className="w-[10px] shrink-0 bg-[#4a4f52] px-px">
        <div className="h-[461px] bg-[#8d9194]" />
      </div>
    </div>
  </div>
);

export default function App() {
  return (
    <div className="flex h-screen flex-col overflow-hidden bg-white font-['Open_Sans',sans-serif]">
      <div className="shrink-0 bg-[#323234]">
        <TabStrip />
        <NavBar />
        <BookmarksBar />
      </div>
      <EditorToolbar />
      <div className="flex min-h-0 flex-1">
        <MainNav />
        <ElementsPanel />
        <button type="button" aria-label="Collapse panel" className="flex w-[17px] shrink-0 items-center justify-center border-r border-[#d8d8d8] bg-[#f9f9f9] pt-1.5">
          <svg viewBox="0 0 6 12" className="h-3 w-1.5" aria-hidden="true">
            <path d="M6 0v12L0 6z" />
          </svg>
        </button>
        <main className="relative min-w-0 flex-1 overflow-hidden">
          <PageCanvas />
          <PropertyEditor />
        </main>
        <div className="mr-[2px] w-[10px] shrink-0 bg-[#f0f0f0] px-px">
          <div className="h-[190px] bg-[#cbcbcb]" />
        </div>
      </div>
      <div className="flex h-[2px] shrink-0 bg-[#464444]">
        <span className="ml-[368px] w-14 bg-[#6a6868]" />
      </div>
    </div>
  );
}
